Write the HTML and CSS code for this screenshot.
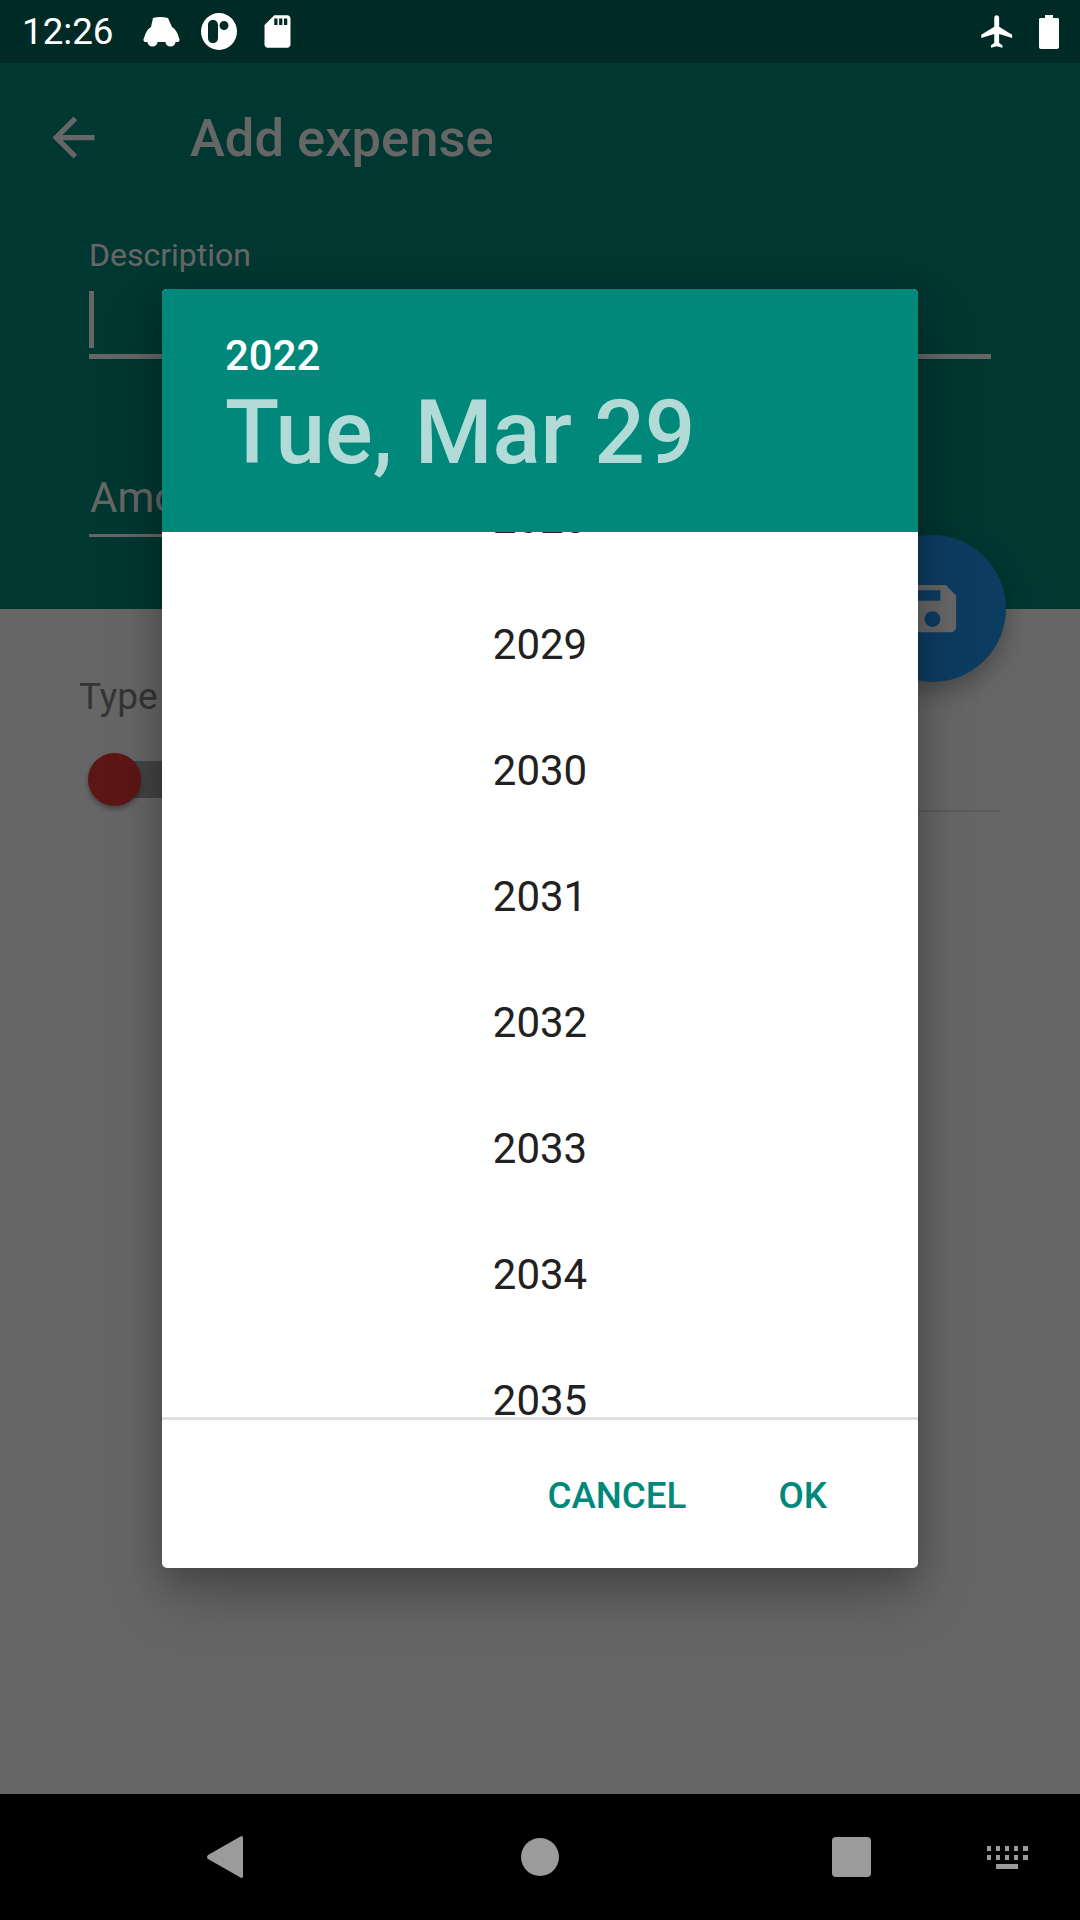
FILE: index.html
```html
<!DOCTYPE html>
<html lang="en">
<head>
    <meta charset="UTF-8">
    <meta name="viewport" content="width=device-width, initial-scale=1.0">
    <title>Add expense</title>
    <link rel="stylesheet" href="styles.css">
</head>
<body>
    <div class="status-bar">
        <span class="clock">12:26</span>
        <svg class="icon-car" viewBox="0 0 37 30"><path d="M10 1Q17-1 25 1L29 10Q34 13 36 21Q37.500 24 35 25H32.500A5 4.500 0 0 1 22.500 25H14.500A5 4.500 0 0 1 4.500 25H2Q-.5 24 1 21Q3 13 8 10Z"/></svg>
        <svg class="icon-circle" viewBox="0 0 36 37"><path fill-rule="evenodd" d="M18 0a18 18.500 0 1 0 0 37a18 18.500 0 0 0 0-37zM12 7c3 0 5 2 5 5v13c0 3-2 5-5 5s-5-2-5-5V12c0-3 2-5 5-5zM23 8a4.500 4.500 0 1 1 0 9a4.500 4.500 0 0 1 0-9z"/></svg>
        <svg class="icon-sd" viewBox="0 0 24 24"><path d="M18 2h-8L4.020 8 4 20c0 1.100.9 2 2 2h12c1.100 0 2-.9 2-2V4c0-1.100-.9-2-2-2zm-6 6h-2V4h2v4zm3 0h-2V4h2v4zm3 0h-2V4h2v4z"/></svg>
        <span class="status-gap"></span>
        <svg class="icon-plane" viewBox="0 0 24 24"><path d="M21 16v-2l-8-5V3.500c0-.83-.67-1.500-1.500-1.500S10 2.670 10 3.500V9l-8 5v2l8-2.500V19l-2 1.500V22l3.500-1 3.500 1v-1.500L13 19v-5.500l8 2.500z"/></svg>
        <svg class="icon-battery" viewBox="0 0 20 34"><path d="M6 0h8v3h4.500c.8 0 1.500.7 1.500 1.500V32c0 1.100-.9 2-2 2H2c-1.100 0-2-.9-2-2V4.500C0 3.700.7 3 1.500 3H6z"/></svg>
    </div>

    <main class="screen">
        <section class="top-panel">
            <div class="toolbar">
                <svg class="icon-back" viewBox="0 0 24 24"><path d="M20 11H7.830l5.590-5.590L12 4l-8 8 8 8 1.410-1.410L7.830 13H20v-2z"/></svg>
                <h1>Add expense</h1>
            </div>
            <div class="field field-description">
                <label>Description</label>
                <div class="field-input"><span class="cursor"></span></div>
            </div>
            <div class="field field-amount">
                <div class="field-input">Amount</div>
            </div>
        </section>

        <section class="type-panel">
            <div class="type-label">Type</div>
            <div class="type-row">
                <div class="switch"><span class="switch-thumb"></span></div>
                <div class="type-spinner"></div>
            </div>
        </section>

        <button class="fab">
            <svg viewBox="0 0 24 24"><path d="M17 3H5c-1.110 0-2 .9-2 2v14c0 1.100.89 2 2 2h14c1.100 0 2-.9 2-2V7l-4-4zm-5 16c-1.660 0-3-1.340-3-3s1.340-3 3-3 3 1.340 3 3-1.340 3-3 3zm3-10H5V5h10v4z"/></svg>
        </button>

        <div class="scrim">
            <div class="dialog">
                <div class="dialog-header">
                    <div class="header-year">2022</div>
                    <div class="header-date">Tue, Mar 29</div>
                </div>
                <div class="year-list">
                    <div class="year-scroll">
                        <div class="year">2028</div>
                        <div class="year">2029</div>
                        <div class="year">2030</div>
                        <div class="year">2031</div>
                        <div class="year">2032</div>
                        <div class="year">2033</div>
                        <div class="year">2034</div>
                        <div class="year">2035</div>
                    </div>
                </div>
                <div class="dialog-actions">
                    <button class="action">CANCEL</button>
                    <button class="action">OK</button>
                </div>
            </div>
        </div>
    </main>

    <nav class="nav-bar">
        <svg class="nav-back" viewBox="0 0 36 42"><path d="M33 .8c1.500-1.400 3-.8 3 1.200v38c0 2-1.500 2.600-3 1.200L1 23c-1.300-1.200-1.300-2.800 0-4z"/></svg>
        <span class="nav-home"></span>
        <span class="nav-recent"></span>
        <svg class="nav-keyboard" viewBox="0 0 41 23">
            <path d="M0 0h4v5H0zM9 0h4v5H9zM18 0h4v5h-4zM27 0h4v5h-4zM36 0h5v5h-5zM0 9h4v5H0zM9 9h4v5H9zM18 9h4v5h-4zM27 9h4v5h-4zM36 9h5v5h-5zM9 18h22v5H9z"/>
        </svg>
    </nav>
</body>
</html>
```

FILE: styles.css
```css
* {
    box-sizing: border-box;
}
body {
    margin: 0;
    width: 1080px;
    height: 1920px;
    display: flex;
    flex-direction: column;
    font-family: Roboto, 'Noto Sans', sans-serif;
    background-color: #000;
    overflow: hidden;
}

/* status bar */
.status-bar {
    height: 63px;
    flex: none;
    display: flex;
    align-items: center;
    padding: 0 21px 0 22px;
    background-color: #002a25;
    color: #fff;
}
.status-bar svg {
    fill: #fff;
    flex: none;
}
.clock {
    font-size: 36.750px;
    width: 90px;
    line-height: 63px;
}
.icon-car {
    width: 37px;
    height: 30px;
    margin-left: 31px;
}
.icon-circle {
    width: 36px;
    height: 37px;
    margin-left: 21px;
}
.icon-sd {
    width: 39px;
    height: 39px;
    margin-left: 21px;
}
.status-gap {
    flex: 1;
}
.icon-plane {
    width: 39px;
    height: 39px;
    margin-right: 1px;
}
.icon-battery {
    width: 20px;
    height: 34px;
    margin-left: 21px;
}

/* the page under the dialog */
.screen {
    position: relative;
    flex: 1;
    display: flex;
    flex-direction: column;
    background-color: #fff;
}
.top-panel {
    height: 546px;
    background-color: #00897b;
    color: #fff;
    padding: 0 89px;
}
.toolbar {
    display: flex;
    align-items: center;
    height: 149px;
}
.icon-back {
    width: 63px;
    height: 63px;
    margin-left: -47px;
    fill: #fff;
}
.toolbar h1 {
    margin: 0 0 0 85px;
    font-size: 52.500px;
    font-weight: 500;
}
.field {
    color: #fff;
}
.field label {
    display: block;
    font-size: 32px;
    line-height: 37px;
    margin-top: 25px;
}
.field-input {
    height: 85px;
    border-bottom: 5px solid #fff;
}
.cursor {
    display: block;
    width: 5px;
    height: 57px;
    background-color: #fff;
    position: relative;
    top: 17px;
}
.field-amount {
    width: 600px;
    margin-top: 111px;
}
.field-amount .field-input {
    height: 67px;
    font-size: 42px;
    line-height: 56px;
    padding-left: 1px;
    border-bottom-width: 3px;
}
.type-panel {
    flex: 1;
    padding: 0 79px;
}
.type-label {
    font-size: 37px;
    line-height: 44px;
    margin-top: 66px;
    color: #858585;
}
.type-row {
    display: flex;
    width: 922px;
    height: 59px;
    margin-top: 34px;
}
.switch {
    position: relative;
    flex: none;
    width: 110px;
    height: 37px;
    margin: 8px 0 0 20px;
    border-radius: 19px;
    background-color: #ababab;
}
.switch-thumb {
    position: absolute;
    left: -11px;
    top: -8px;
    width: 53px;
    height: 53px;
    border-radius: 50%;
    background-color: #e53935;
    box-shadow: 0 3px 5px rgba(0, 0, 0, 0.35);
}
.type-spinner {
    flex: 1;
    margin-left: 60px;
    border-bottom: 2px solid #e6e6e6;
}
.fab {
    position: absolute;
    top: 472px;
    left: 859px;
    width: 147px;
    height: 147px;
    padding: 0;
    border: none;
    border-radius: 50%;
    background-color: #2196f3;
    display: flex;
    align-items: center;
    justify-content: center;
    box-shadow: 0 10px 24px rgba(0, 0, 0, 0.3);
}
.fab svg {
    width: 63px;
    height: 63px;
    fill: #fff;
}

/* date picker dialog */
.scrim {
    position: absolute;
    inset: 0;
    display: flex;
    align-items: center;
    justify-content: center;
    background-color: rgba(0, 0, 0, 0.6);
}
.dialog {
    width: 756px;
    height: 1279px;
    display: flex;
    flex-direction: column;
    background-color: #fff;
    border-radius: 5px;
    overflow: hidden;
    box-shadow: 0 30px 60px rgba(0, 0, 0, 0.22), 0 10px 30px rgba(0, 0, 0, 0.18);
}
.dialog-header {
    height: 243px;
    flex: none;
    padding: 42px 63px 0;
    background-color: #00897b;
}
.header-year {
    font-size: 42px;
    font-weight: 500;
    line-height: 50px;
    color: #fff;
}
.header-date {
    font-size: 89px;
    font-weight: 500;
    line-height: 104px;
    color: #b2dbd7;
}
.year-list {
    height: 885px;
    flex: none;
    overflow: hidden;
}
.year-scroll {
    margin-top: -76px;
}
.year {
    height: 126px;
    line-height: 126px;
    text-align: center;
    font-size: 42px;
    color: #212121;
}
.dialog-actions {
    flex: 1;
    display: flex;
    justify-content: flex-end;
    align-items: center;
    gap: 92px;
    padding: 2px 91px 0 0;
    border-top: 3px solid #e0e0e0;
}
.action {
    padding: 0;
    border: none;
    background: none;
    font-family: inherit;
    font-size: 36.750px;
    font-weight: 500;
    color: #00897b;
}

/* navigation bar */
.nav-bar {
    height: 126px;
    flex: none;
    display: flex;
    align-items: center;
    padding-left: 207px;
    background-color: #000;
}
.nav-back {
    width: 36px;
    height: 42px;
    fill: #9b9b9b;
}
.nav-home {
    width: 38px;
    height: 38px;
    margin-left: 278px;
    border-radius: 50%;
    background-color: #9b9b9b;
}
.nav-recent {
    width: 39px;
    height: 40px;
    margin-left: 273px;
    border-radius: 4px;
    background-color: #9b9b9b;
}
.nav-keyboard {
    width: 41px;
    height: 23px;
    margin-left: 116px;
    fill: #9b9b9b;
}
```
